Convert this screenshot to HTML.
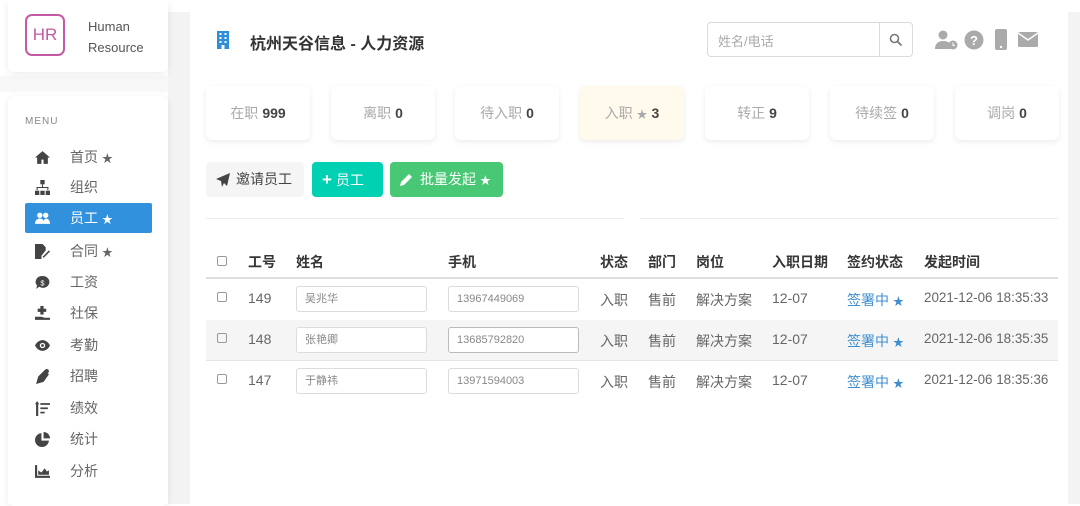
<!DOCTYPE html>
<html><head><meta charset="utf-8"><style>
*{margin:0;padding:0;box-sizing:border-box}
body{width:1080px;height:504px;overflow:hidden;background:#fff;font-family:"Liberation Sans","Noto Sans CJK SC",sans-serif;color:#4a4a4a;position:relative}
.a{position:absolute}
.gray{background:#f3f3f3}
.card{position:absolute;background:#fff;border-radius:6px;box-shadow:0 2px 8px rgba(0,0,0,.08)}
.stat{position:absolute;top:86px;width:104px;height:54px;background:#fff;border-radius:6px;box-shadow:0 2px 6px rgba(0,0,0,.08);font-size:14px;color:#aaa;text-align:center;line-height:54px}
.stat b{color:#444;font-weight:bold;margin-left:4px}
.mi{position:absolute;left:25px;width:127px;height:30px;font-size:14px;color:#666;line-height:30px}
.mi .ic{position:absolute;left:10px;top:8px;width:15px;height:15px}
.mi span{position:absolute;left:45px}
.s{font-size:11px}
.th{position:absolute;top:252px;font-size:14px;font-weight:bold;color:#363636}
.td{position:absolute;font-size:14px;color:#666}
.inp{position:absolute;width:131px;height:26px;border:1px solid #dcdcdc;border-radius:3px;font-size:11px;color:#888;line-height:24px;padding-left:8px;background:#fff}
.cb{position:absolute;left:217px;width:10px;height:10px;border:1px solid #999;border-radius:2px}
.blue{color:#3e8ed0}
.tm{font-size:13.4px}
</style></head><body>
<div class="a gray" style="left:168px;top:12px;width:22px;height:492px"></div>
<div class="a gray" style="left:1068px;top:12px;width:12px;height:492px"></div>
<div class="a" style="left:0;top:76px;width:168px;height:16px;background:#f8f8f8"></div>

<div class="card" style="left:8px;top:0;width:160px;height:72px;border-radius:0 0 6px 6px">
  <div class="a" style="left:17px;top:14px;width:40px;height:42px;border:2px solid #c35aa3;border-radius:7px;color:#c35aa3;font-size:17px;line-height:38px;text-align:center">HR</div>
  <div class="a" style="left:80px;top:16px;font-size:13px;color:#555;line-height:21px">Human<br>Resource</div>
</div>
<div class="card" style="left:8px;top:96px;width:160px;height:410px">
  <div class="a" style="left:17px;top:20px;font-size:10px;color:#888;letter-spacing:1px">MENU</div>
</div>
<div class="mi" style="top:142px"><svg class="ic" viewBox="0 0 14 14"><path d="M7 1L0 7h2v6h4V9h2v4h4V7h2z" fill="#444"/></svg><span>首页 <span class="s" style="position:static">★</span></span></div>
<div class="mi" style="top:172px"><svg class="ic" viewBox="0 0 14 14" fill="#444"><rect x="5" y="0" width="4" height="4"/><rect x="6.5" y="4" width="1" height="3"/><rect x="1.5" y="6.5" width="11" height="1"/><rect x="1.5" y="6.5" width="1" height="3"/><rect x="11.5" y="6.5" width="1" height="3"/><rect x="0" y="10" width="4" height="4"/><rect x="5" y="10" width="4" height="4"/><rect x="10" y="10" width="4" height="4"/></svg><span>组织</span></div>
<div class="mi" style="top:203px;background:#3291dc;color:#fff;border-radius:2px"><svg class="ic" viewBox="0 0 14 14" fill="#fff"><circle cx="4.5" cy="4" r="2.5"/><circle cx="10" cy="4" r="2.5"/><path d="M0 12c0-3 2-5 4.5-5S9 9 9 12zM8 12c0-2 0-4 2-5 2.5 0 4 2 4 5z"/></svg><span>员工 <span class="s" style="position:static">★</span></span></div>
<div class="mi" style="top:236px"><svg class="ic" viewBox="0 0 14 14" fill="#444"><path d="M0 0h7l3 3v3L6 11v3H0z"/><path d="M7 12l6-6 1 1-6 6z"/></svg><span>合同 <span class="s" style="position:static">★</span></span></div>
<div class="mi" style="top:267px"><svg class="ic" viewBox="0 0 14 14"><path d="M7 1a6 5.5 0 1 1-3 10L1 13l1-3A6 5.5 0 0 1 7 1z" fill="#444"/><text x="7" y="10" font-size="7" fill="#fff" text-anchor="middle">$</text></svg><span>工资</span></div>
<div class="mi" style="top:298px"><svg class="ic" viewBox="0 0 14 14" fill="#444"><rect x="5" y="0" width="3" height="8"/><rect x="2.5" y="2.5" width="8" height="3"/><path d="M0 10h6l3 1h5v2H0z"/></svg><span>社保</span></div>
<div class="mi" style="top:330px"><svg class="ic" viewBox="0 0 14 14"><path d="M0 7c2-4 5-5 7-5s5 1 7 5c-2 4-5 5-7 5S2 11 0 7z" fill="#444"/><circle cx="7" cy="7" r="2.5" fill="#fff"/><circle cx="7" cy="7" r="1.3" fill="#444"/></svg><span>考勤</span></div>
<div class="mi" style="top:361px"><svg class="ic" viewBox="0 0 14 14" fill="#444"><path d="M9 1l4 4-5 7-7 2 2-7z"/><circle cx="11" cy="2" r="2"/></svg><span>招聘</span></div>
<div class="mi" style="top:393px"><svg class="ic" viewBox="0 0 14 14" fill="#444"><path d="M2 0l2 3H3v11H1V3H0z"/><rect x="5" y="2" width="9" height="1.6"/><rect x="5" y="6" width="7" height="1.6"/><rect x="5" y="10" width="4" height="1.6"/></svg><span>绩效</span></div>
<div class="mi" style="top:424px"><svg class="ic" viewBox="0 0 14 14" fill="#444"><path d="M6 1v7h7A6.5 6.5 0 1 1 6 1z"/><path d="M8 0a6 6 0 0 1 6 6H8z"/></svg><span>统计</span></div>
<div class="mi" style="top:456px"><svg class="ic" viewBox="0 0 14 14" fill="#444"><path d="M0 1h2v10h12v2H0z"/><path d="M3 10V6l3 2 3-4 2 3 2-1v4z"/></svg><span>分析</span></div>

<div class="a" style="left:190px;top:12px;width:878px;height:492px;background:#fff"></div>
<svg class="a" style="left:216px;top:31px" width="14" height="18" viewBox="0 0 14 18"><rect x="1" y="0" width="12" height="18" fill="#2e8ed8"/><g fill="#fff"><rect x="3.5" y="2" width="2" height="2"/><rect x="8.5" y="2" width="2" height="2"/><rect x="3.5" y="6" width="2" height="2"/><rect x="8.5" y="6" width="2" height="2"/><rect x="3.5" y="10" width="2" height="2"/><rect x="8.5" y="10" width="2" height="2"/><rect x="5.5" y="14" width="3" height="4"/></g></svg>
<div class="a" style="left:250px;top:30px;font-size:16px;font-weight:bold;color:#333">杭州天谷信息 - 人力资源</div>
<div class="a" style="left:707px;top:22px;width:206px;height:35px;border:1px solid #dbdbdb;border-radius:4px"></div>
<div class="a" style="left:879px;top:22px;width:1px;height:35px;background:#dbdbdb"></div>
<div class="a" style="left:718px;top:31px;font-size:13px;color:#aaa">姓名/电话</div>
<svg class="a" style="left:889px;top:33px" width="14" height="14" viewBox="0 0 14 14"><circle cx="5.5" cy="5.5" r="4" fill="none" stroke="#777" stroke-width="1.6"/><path d="M8.5 8.5l4 4" stroke="#777" stroke-width="1.8"/></svg>
<svg class="a" style="left:935px;top:30px" width="24" height="20" viewBox="0 0 24 20" fill="#aaa"><circle cx="8" cy="5" r="4.5"/><path d="M0 19c0-5 3-8 8-8s7 2 8 4v4z"/><circle cx="18" cy="15" r="4.5"/><path d="M18 12.5v3h2" stroke="#fff" stroke-width="1" fill="none"/></svg>
<svg class="a" style="left:964px;top:30px" width="20" height="20" viewBox="0 0 20 20"><circle cx="10" cy="10" r="9.5" fill="#aaa"/><text x="10" y="15" font-size="13" font-weight="bold" fill="#fff" text-anchor="middle" font-family="Liberation Sans">?</text></svg>
<svg class="a" style="left:995px;top:29px" width="12" height="21" viewBox="0 0 12 21"><rect width="12" height="21" rx="2" fill="#aaa"/><circle cx="6" cy="18" r="1.2" fill="#fff"/></svg>
<svg class="a" style="left:1018px;top:32px" width="20" height="15" viewBox="0 0 20 15"><rect width="20" height="15" rx="1.5" fill="#aaa"/><path d="M0 1l10 7 10-7" stroke="#fff" stroke-width="1.5" fill="none"/></svg>

<div class="stat" style="left:206px">在职<b>999</b></div>
<div class="stat" style="left:331px">离职<b>0</b></div>
<div class="stat" style="left:455px">待入职<b>0</b></div>
<div class="stat" style="left:580px;background:#fffaeb">入职 <span class="s">★</span><b>3</b></div>
<div class="stat" style="left:705px">转正<b>9</b></div>
<div class="stat" style="left:830px">待续签<b>0</b></div>
<div class="stat" style="left:955px">调岗<b>0</b></div>

<div class="a" style="left:206px;top:162px;width:98px;height:35px;background:#f5f5f5;border-radius:4px;font-size:14px;color:#444;line-height:35px;padding-left:30px">邀请员工</div>
<svg class="a" style="left:216px;top:173px" width="14" height="14" viewBox="0 0 14 14"><path d="M14 0L0 6l5 2 1 6 2-4 3 3z" fill="#444"/></svg>
<div class="a" style="left:312px;top:162px;width:71px;height:35px;background:#00d1b2;border-radius:4px;font-size:14px;color:#fff;line-height:35px;padding-left:10px"><b style="font-size:17px">+</b> 员工</div>
<div class="a" style="left:390px;top:162px;width:113px;height:35px;background:#48c774;border-radius:4px;font-size:14px;color:#fff;line-height:35px;padding-left:30px">批量发起 <span class="s">★</span></div>
<svg class="a" style="left:400px;top:173px" width="13" height="13" viewBox="0 0 13 13"><path d="M0 13l1-4 8-8 3 3-8 8z" fill="#fff"/></svg>

<div class="a" style="left:206px;top:218px;width:418px;height:1px;background:#ececec"></div>
<div class="a" style="left:640px;top:218px;width:418px;height:1px;background:#ececec"></div>

<div class="cb" style="top:256px"></div>
<div class="th" style="left:248px">工号</div><div class="th" style="left:296px">姓名</div><div class="th" style="left:448px">手机</div><div class="th" style="left:600px">状态</div><div class="th" style="left:648px">部门</div><div class="th" style="left:696px">岗位</div><div class="th" style="left:772px">入职日期</div><div class="th" style="left:847px">签约状态</div><div class="th" style="left:924px">发起时间</div>
<div class="a" style="left:206px;top:277px;width:852px;height:2px;background:#dedede"></div>
<div class="a" style="left:206px;top:320px;width:852px;height:41px;background:#f5f5f5"></div>
<div class="a" style="left:206px;top:360px;width:852px;height:1px;background:#e4e4e4"></div>

<div class="cb" style="top:292px"></div><div class="td" style="left:248px;top:290px">149</div><div class="inp" style="left:296px;top:286px">吴兆华</div><div class="inp" style="left:448px;top:286px">13967449069</div>
<div class="td" style="left:600px;top:290px">入职</div><div class="td" style="left:648px;top:290px">售前</div><div class="td" style="left:696px;top:290px">解决方案</div><div class="td" style="left:772px;top:290px">12-07</div><div class="td blue" style="left:847px;top:290px">签署中 <span class="s">★</span></div><div class="td tm" style="left:924px;top:290px">2021-12-06 18:35:33</div>

<div class="cb" style="top:333px"></div><div class="td" style="left:248px;top:331px">148</div><div class="inp" style="left:296px;top:327px">张艳卿</div><div class="inp" style="left:448px;top:327px;border-color:#bbb">13685792820</div>
<div class="td" style="left:600px;top:331px">入职</div><div class="td" style="left:648px;top:331px">售前</div><div class="td" style="left:696px;top:331px">解决方案</div><div class="td" style="left:772px;top:331px">12-07</div><div class="td blue" style="left:847px;top:331px">签署中 <span class="s">★</span></div><div class="td tm" style="left:924px;top:331px">2021-12-06 18:35:35</div>

<div class="cb" style="top:374px"></div><div class="td" style="left:248px;top:372px">147</div><div class="inp" style="left:296px;top:368px">于静祎</div><div class="inp" style="left:448px;top:368px">13971594003</div>
<div class="td" style="left:600px;top:372px">入职</div><div class="td" style="left:648px;top:372px">售前</div><div class="td" style="left:696px;top:372px">解决方案</div><div class="td" style="left:772px;top:372px">12-07</div><div class="td blue" style="left:847px;top:372px">签署中 <span class="s">★</span></div><div class="td tm" style="left:924px;top:372px">2021-12-06 18:35:36</div>
</body></html>
